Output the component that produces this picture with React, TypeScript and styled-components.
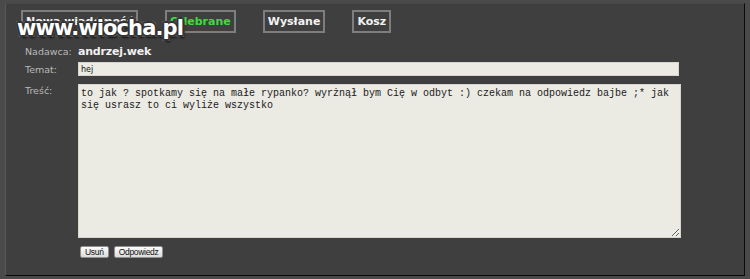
import React from "react";
import styled, { createGlobalStyle } from "styled-components";

const Global = createGlobalStyle`
  html, body { margin: 0; padding: 0; background: #4a4a4a; }
  body { width: 750px; height: 279px; overflow: hidden; font-family: "DejaVu Sans", Verdana, sans-serif; }
`;

const Panel = styled.div`
  position: relative;
  box-sizing: border-box;
  margin: 3px 5px 0 5px;
  width: 740px;
  height: 273px;
  background: #3f3f3f;
  border-left: 1px solid #585858;
  border-top: 1px solid #474747;
  border-right: 1px solid #0a0a0a;
  border-bottom: 1px solid #0a0a0a;
  padding: 6px 0 0 15px;
`;

const Tabs = styled.div`
  display: flex;
  gap: 27px;
`;

const Tab = styled.div<{ $active?: boolean }>`
  box-sizing: border-box;
  height: 23px;
  padding: 0 3px;
  border: 2px solid #7e7e7e;
  display: flex;
  align-items: center;
  font-family: "DejaVu Sans", Verdana, sans-serif;
  font-weight: bold;
  font-size: 11px;
  color: ${(p) => (p.$active ? "#3ddc3d" : "#f2f2f2")};
`;

const Watermark = styled.div`
  position: absolute;
  left: 11px;
  top: 12px;
  font-family: "DejaVu Sans", Verdana, sans-serif;
  font-weight: bold;
  font-size: 21px;
  letter-spacing: -0.9px;
  color: #ffffff;
  text-shadow:
    -1px -1px 0 #333, 1px -1px 0 #333, -1px 1px 0 #333, 1px 1px 0 #333,
    0 -2px 0 #333, 0 2px 0 #333, -2px 0 0 #333, 2px 0 0 #333,
    -2px -2px 0 #555, 2px 2px 0 #555, -2px 2px 0 #555, 2px -2px 0 #555,
    2px 3px 2px #111;
  pointer-events: none;
  white-space: nowrap;
`;

const Form = styled.div`
  display: grid;
  grid-template-columns: 53px 603px;
  grid-template-rows: 13px 14px 158px 12px;
  row-gap: 4px;
  margin: 12px 0 0 4px;
`;

const Label = styled.div<{ $top?: boolean }>`
  font-size: 9.5px;
  color: #b9b9b9;
  display: flex;
  align-items: ${(p) => (p.$top ? "flex-start" : "center")};
  padding-top: ${(p) => (p.$top ? "5px" : "0")};
`;

const Value = styled.div`
  font-size: 11px;
  font-weight: bold;
  letter-spacing: -0.2px;
  color: #f0f0f0;
  display: flex;
  align-items: center;
`;

const Input = styled.input`
  display: block;
  box-sizing: border-box;
  width: 601px;
  height: 14px;
  margin: 0;
  padding: 0 2px;
  border: 1px solid #d6d6cf;
  background: #ebebe4;
  font-family: "DejaVu Sans", Verdana, sans-serif;
  font-size: 8px;
  color: #111;
  outline: none;
`;

const TextArea = styled.textarea`
  display: block;
  box-sizing: border-box;
  width: 603px;
  height: 154px;
  margin: 4px 0 0 0;
  padding: 3px 2px;
  border: 1px solid #d6d6cf;
  background: #ebebe4;
  font-family: "Liberation Mono", "Courier New", monospace;
  font-size: 10px;
  line-height: 12px;
  color: #1a1a1a;
  outline: none;
`;

const Actions = styled.div`
  grid-column: 2;
  display: flex;
  gap: 5px;
  padding-left: 2px;
  margin-top: 4px;
`;

const Btn = styled.button`
  box-sizing: border-box;
  height: 12px;
  padding: 0 4px;
  border: 1px solid #8f8f8f;
  border-radius: 2px;
  background: linear-gradient(#fbfbfb, #dcdcdc);
  font-family: "Liberation Sans", Arial, sans-serif;
  font-size: 8.5px;
  letter-spacing: -0.3px;
  line-height: 10px;
  color: #111;
`;

export default function App() {
  return (
    <>
      <Global />
      <Panel>
        <Tabs>
          <Tab>Nowa wiadomość</Tab>
          <Tab $active>Odebrane</Tab>
          <Tab>Wysłane</Tab>
          <Tab>Kosz</Tab>
        </Tabs>
        <Form>
          <Label>Nadawca:</Label>
          <Value>andrzej.wek</Value>
          <Label>Temat:</Label>
          <Input readOnly value="hej" />
          <Label $top>Treść:</Label>
          <TextArea
            readOnly
            defaultValue="to jak ? spotkamy się na małe rypanko? wyrżnął bym Cię w odbyt :) czekam na odpowiedz bajbe ;* jak się usrasz to ci wyliże wszystko"
          />
          <Actions>
            <Btn>Usuń</Btn>
            <Btn>Odpowiedz</Btn>
          </Actions>
        </Form>
        <Watermark>www.wiocha.pl</Watermark>
      </Panel>
    </>
  );
}
